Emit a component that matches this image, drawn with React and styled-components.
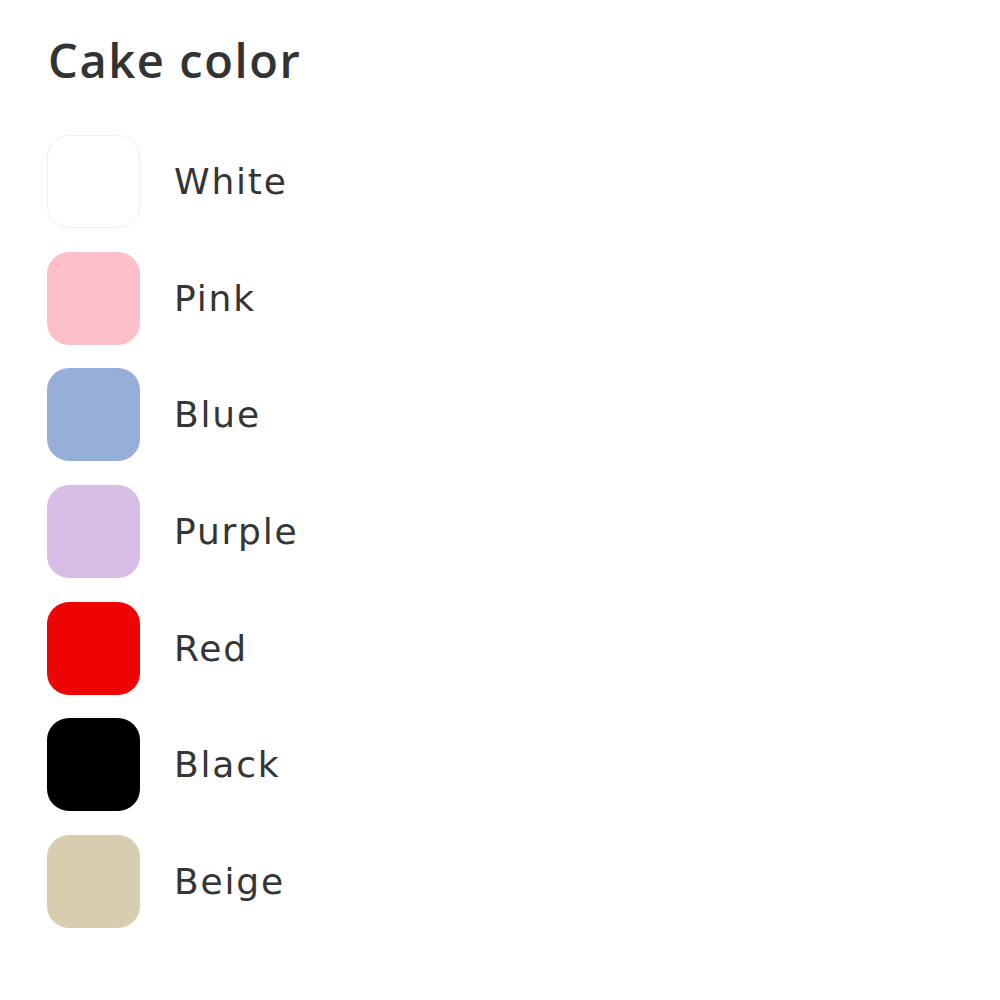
import React from "react";
import styled, { createGlobalStyle } from "styled-components";

const Global = createGlobalStyle`
  html, body { margin: 0; padding: 0; background: #ffffff; }
  body { font-family: "DejaVu Sans", "Open Sans", sans-serif; color: #333333; }
`;

const Page = styled.div`
  width: 1000px;
  height: 1000px;
  box-sizing: border-box;
  padding: 29px 47px 0;
  background: #ffffff;
`;

const Title = styled.h2`
  margin: 0 0 0 1px;
  font-family: "Open Sans", sans-serif;
  font-weight: 600;
  font-size: 47px;
  line-height: 62px;
  color: #333333;
  letter-spacing: 1.6px;
`;

const List = styled.ul`
  list-style: none;
  margin: 44px 0 0;
  padding: 0;
  display: flex;
  flex-direction: column;
  gap: 23.7px;
`;

const Row = styled.li`
  display: flex;
  align-items: center;
  gap: 34px;
`;

const Swatch = styled.span`
  width: 93px;
  height: 93px;
  border-radius: 22px;
  background: ${(p) => p.$color};
  box-sizing: border-box;
  border: ${(p) => (p.$outlined ? "1px solid #f0f0f0" : "none")};
  flex: none;
`;

const Label = styled.span`
  font-family: "DejaVu Sans", sans-serif;
  font-size: 36px;
  letter-spacing: 1.8px;
  color: #353535;
`;

const colors = [
  { name: "White", color: "#ffffff", outlined: true },
  { name: "Pink", color: "#fdc0cb" },
  { name: "Blue", color: "#97afd8" },
  { name: "Purple", color: "#d8bde6" },
  { name: "Red", color: "#ee0404" },
  { name: "Black", color: "#000000" },
  { name: "Beige", color: "#d8cdaf" },
];

export default function App() {
  return (
    <>
      <Global />
      <Page>
        <Title>Cake color</Title>
        <List>
          {colors.map((c) => (
            <Row key={c.name}>
              <Swatch $color={c.color} $outlined={c.outlined} />
              <Label>{c.name}</Label>
            </Row>
          ))}
        </List>
      </Page>
    </>
  );
}
